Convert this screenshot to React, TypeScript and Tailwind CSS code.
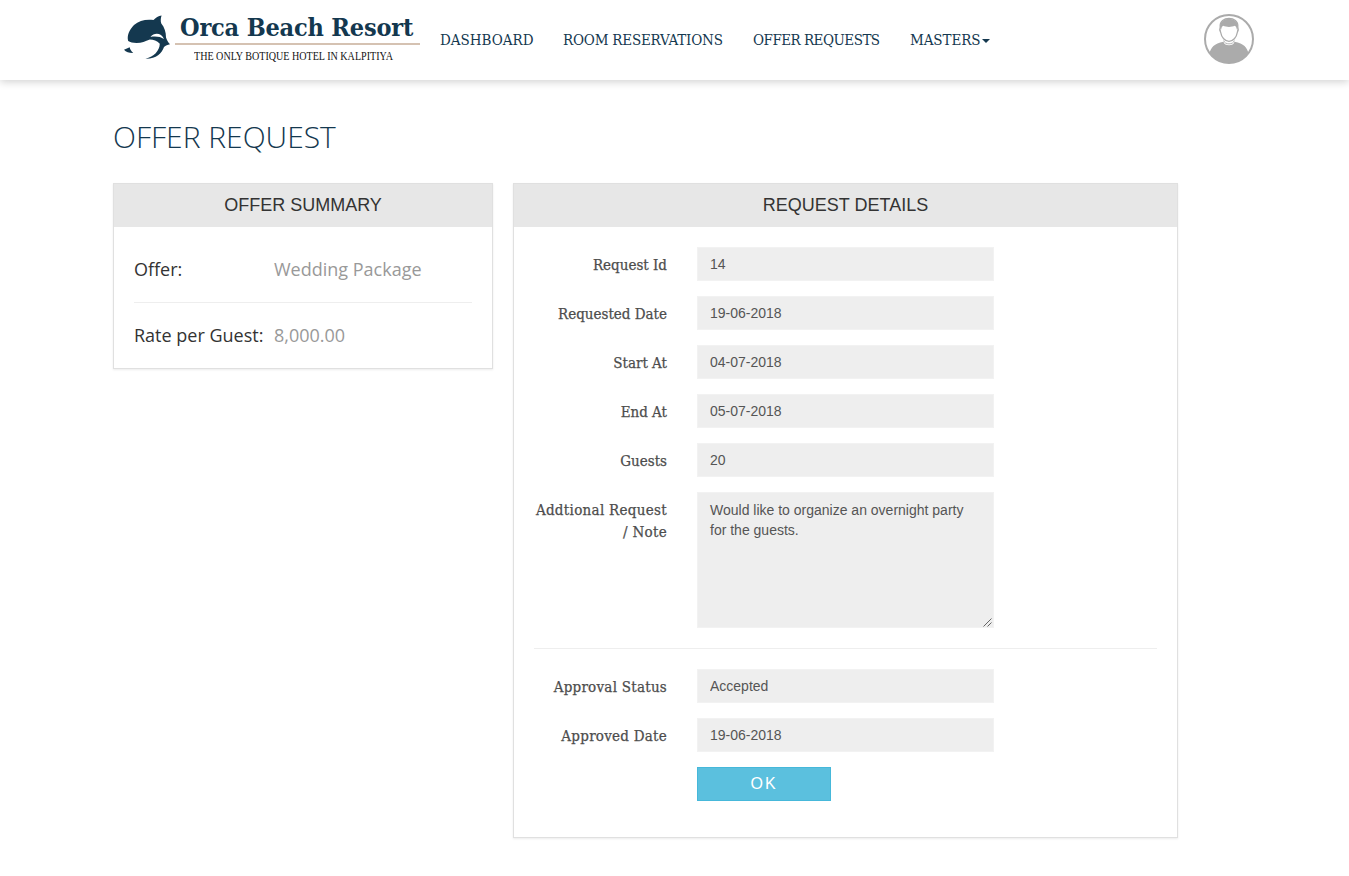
import type { ReactNode } from "react";

const slab = "font-['DejaVu_Serif_Condensed','DejaVu_Serif',serif] [font-stretch:condensed]";

function Logo() {
  return (
    <div className="flex h-[60px] w-[301px]">
      <svg width="55" height="60" viewBox="0 0 55 60" className="block shrink-0">
        <g fill="#14384f">
          <path d="M8.200 31C6.800 26 9 20 14 15C19 10.500 26 9 33.500 10C35.500 7.500 38.500 5.800 41.600 5.400C40.600 8 40.500 11 41.300 13.500C44.500 17.500 46 22 46 27.500C46.800 30 48 32.200 50 34.300C47.500 34.700 45.800 35.700 44 37C41.800 43.500 36 49 25.500 48.700C34 46.500 39.500 41 39.800 33.700C37 31 33.500 29.800 29.800 29.600C25 31.500 22 33 16.500 33C13 33 10 32.300 8.200 31Z" />
          <path d="M4 39.800L9.700 37.300C10 39.400 11 40.900 13.200 42.900C9.500 43 6 42.200 4 39.800Z" />
        </g>
        <path d="M30.500 26.900C34 22.300 41.500 22.500 44 29C40.500 26.600 35.500 26 30.500 26.900Z" fill="#fff" />
      </svg>
      <div className="flex flex-col">
        <div className="h-[33px] pl-[5px] font-['DejaVu_Serif_Condensed','DejaVu_Serif',serif] text-[25px] leading-[36px] font-bold tracking-[-0.180px] [font-stretch:condensed] whitespace-nowrap text-[#14384f]">
          Orca Beach Resort
        </div>
        <div className="h-[2px] w-[245px] bg-[#d5c2b2]" />
        <div className="ml-[19px] w-fit origin-left scale-x-[0.840] font-['Liberation_Serif',serif] text-xs leading-[22px] whitespace-nowrap text-[#111]">
          THE ONLY BOTIQUE HOTEL IN KALPITIYA
        </div>
      </div>
    </div>
  );
}

function Avatar() {
  return (
    <svg width="50" height="50" viewBox="0 0 50 50" className="block">
      <defs>
        <clipPath id="avatar-clip">
          <circle cx="25" cy="25" r="24" />
        </clipPath>
      </defs>
      <circle cx="25" cy="25" r="24" fill="#fff" stroke="#ababab" strokeWidth="2" />
      <g clipPath="url(#avatar-clip)">
        <path d="M5 41C7 32.500 10 29.800 19.500 27.700C20 32.500 30 32.500 30.500 27.700C40 29.800 43 32.500 45 41L38 50H12Z" fill="#ababab" />
      </g>
      <path d="M19.700 26.500C20.500 31 29.500 31 30.300 26.500" fill="#fff" stroke="#ababab" strokeWidth="0.900" />
      <path d="M16.200 13C15 1.500 35 1.500 33.800 13C34.500 14.500 34 17 33.300 18.500C32.500 23.500 29 27.300 25 27.300C21 27.300 17.500 23.500 16.700 18.500C16 17 15.500 14.500 16.200 13Z" fill="#fff" stroke="#ababab" strokeWidth="1.300" />
      <path d="M16.200 14.500C14.500 1.500 35.500 1.500 33.800 14.500L32.800 15.500C32.500 13.500 31.800 12.300 30.800 11.800C27.500 13.300 22.500 13.300 19.200 11.800C18.200 12.300 17.500 13.500 17.200 15.500Z" fill="#ababab" />
    </svg>
  );
}

function NavItem({ children, className }: { children: ReactNode; className: string }) {
  return (
    <a href="#" className={`flex items-center whitespace-nowrap text-[15px] leading-5 text-[#14384f] ${slab} ${className}`}>
      {children}
    </a>
  );
}

function Card({ title, className, children }: { title: string; className: string; children: ReactNode }) {
  return (
    <section className={`border border-[#e0e0e0] bg-white shadow-[0_1px_2px_rgba(0,0,0,0.08)] ${className}`}>
      <h2 className="flex h-[43px] items-center justify-center bg-[#e7e7e7] pb-[2px] font-['Liberation_Sans',sans-serif] text-lg text-[#333]">
        {title}
      </h2>
      {children}
    </section>
  );
}

function Row({ label, className = "", children }: { label: ReactNode; className?: string; children: ReactNode }) {
  return (
    <div className="mb-[15px] flex">
      <label className={`w-[133px] shrink-0 pt-[7px] text-right text-[15px] leading-[22px] whitespace-nowrap text-[#4d4d4d] [-webkit-text-stroke:0.25px_#4d4d4d] ${slab} ${className}`}>
        {label}
      </label>
      <div className="ml-[30px] w-[297px]">{children}</div>
    </div>
  );
}

const field =
  "block w-full resize-none border border-[#f2f2f2] bg-[#eee] px-3 font-['Liberation_Sans',sans-serif] text-sm leading-5 text-[#555]";

function TextRow({ label, value, className }: { label: string; value: string; className?: string }) {
  return (
    <Row label={label} className={className}>
      <input readOnly value={value} className={`h-[34px] py-[6px] ${field}`} />
    </Row>
  );
}

export default function App() {
  return (
    <div className="min-h-[876px] w-full bg-white">
      <header className="flex h-20 items-start bg-white pl-[120px] shadow-[0_2px_8px_rgba(0,0,0,0.18)]">
        <div className="mt-[10px] w-[320px]">
          <Logo />
        </div>
        <nav className="flex h-20 grow items-center">
          <NavItem className="w-[123px]">DASHBOARD</NavItem>
          <NavItem className="w-[190px] tracking-[-0.210px]">ROOM RESERVATIONS</NavItem>
          <NavItem className="w-[157px] tracking-[-0.520px]">OFFER REQUESTS</NavItem>
          <NavItem className="tracking-[-0.100px]">
            MASTERS
            <svg width="8" height="4" viewBox="0 0 8 4" className="mt-px ml-[2px]">
              <path d="M0 0H8L4 4Z" fill="#14384f" />
            </svg>
          </NavItem>
        </nav>
        <div className="mt-[14px] mr-[95px]">
          <Avatar />
        </div>
      </header>

      <main className="ml-[113px] w-[1065px] pt-[39px]">
        <h1 className="h-16 font-['Open_Sans',sans-serif] text-[30px] leading-[35px] font-light text-[#14384f]">OFFER REQUEST</h1>
        <div className="flex items-start gap-5">
          <Card title="OFFER SUMMARY" className="w-[380px]">
            <dl className="h-[141px] px-[20px] font-['Open_Sans',sans-serif] text-lg text-[#333]">
              <div className="flex h-[76px] items-center border-b border-[#eee] pt-2">
                <dt className="w-[140px]">Offer:</dt>
                <dd className="text-[#999]">Wedding Package</dd>
              </div>
              <div className="flex h-[63px] items-center">
                <dt className="w-[140px] whitespace-nowrap">Rate per Guest:</dt>
                <dd className="text-[#999]">8,000.00</dd>
              </div>
            </dl>
          </Card>

          <Card title="REQUEST DETAILS" className="w-[665px]">
            <form className="h-[610px] px-5 pt-5">
              <TextRow label="Request Id" value="14" />
              <TextRow label="Requested Date" value="19-06-2018" />
              <TextRow label="Start At" value="04-07-2018" />
              <TextRow label="End At" value="05-07-2018" />
              <TextRow label="Guests" value="20" />
              <Row
                className="tracking-[0.300px]"
                label={
                  <>
                    Addtional Request
                    <br />/ Note
                  </>
                }
              >
                <div className="relative">
                  <textarea readOnly value="Would like to organize an overnight party for the guests." className={`h-[136px] pt-[7px] pb-[6px] ${field}`} />
                  <svg width="9" height="9" viewBox="0 0 9 9" className="absolute right-[2px] bottom-[1px]">
                    <path d="M0.500 8.500L8.500 0.500M4.500 8.500L8.500 4.500" stroke="#555" strokeWidth="0.900" fill="none" />
                  </svg>
                </div>
              </Row>
              <hr className="mt-5 mb-5 border-[#eee]" />
              <TextRow label="Approval Status" value="Accepted" className="tracking-[0.250px]" />
              <TextRow label="Approved Date" value="19-06-2018" className="tracking-[0.250px]" />
              <button
                type="button"
                className="ml-[163px] block h-[34px] w-[134px] border border-[#46b8da] bg-[#5bc0de] font-['Liberation_Sans',sans-serif] text-base leading-5 tracking-[2px] text-white"
              >
                OK
              </button>
            </form>
          </Card>
        </div>
      </main>
    </div>
  );
}
